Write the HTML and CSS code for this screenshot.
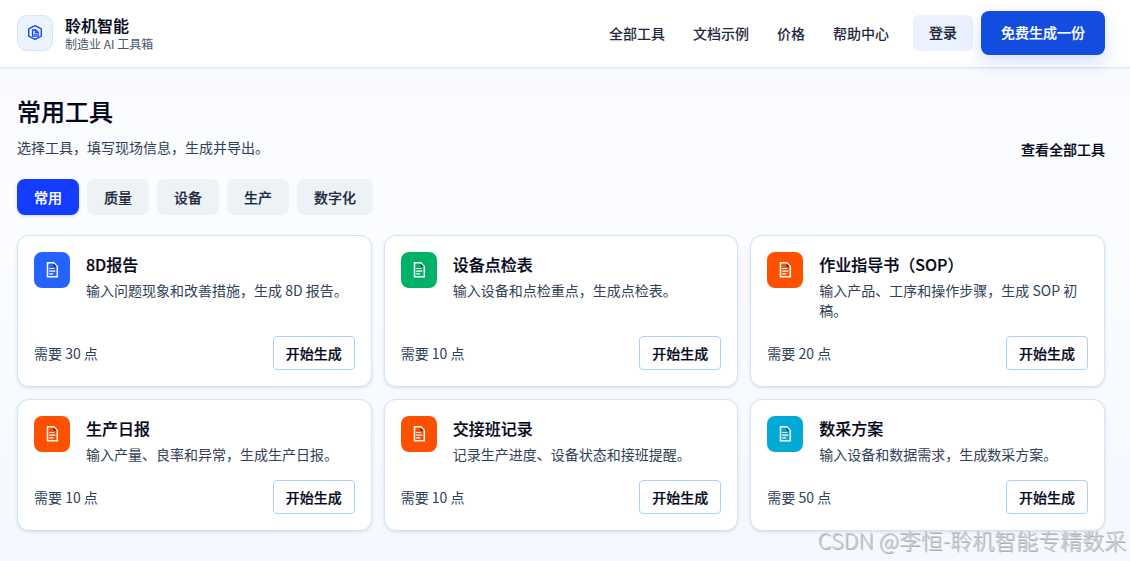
FILE: index.html
```
<!DOCTYPE html>
<html lang="zh-CN">
<head>
    <meta charset="UTF-8">
    <meta name="viewport" content="width=device-width, initial-scale=1.0">
    <title>聆机智能 - 制造业 AI 工具箱</title>
    <link rel="stylesheet" href="styles.css">
</head>
<body>
    <svg class="sprite" aria-hidden="true">
        <symbol id="icon-doc" viewBox="0 0 18 18">
            <path d="M4.5 1.8h6.3l3.5 3.7v10.3H4.5z" fill="none" stroke="currentColor" stroke-width="1.5"/>
            <path d="M10.6 2.6v3.2h3z" fill="#0f1f3d"/>
            <path d="M6.2 7.5h5M6.2 10.2h6M6.2 12.8h4" fill="none" stroke="currentColor" stroke-width="1.2"/>
        </symbol>
    </svg>

    <header class="header">
        <a class="brand">
            <span class="brand-logo">
                <svg width="18" height="18" viewBox="0 0 18 18" fill="none" stroke="currentColor">
                    <path d="M9 1.7l6.3 3.2v7.2L9 15.4l-6.3-3.3V4.9z" stroke-width="1.4" stroke-linejoin="round"/>
                    <path d="M6.6 6h3.2l2.4 2.2v4H6.6z" stroke-width="1.3"/>
                    <path d="M9.4 6.2v2.3h2.6M8 10.4h2.8" stroke-width="1.1"/>
                </svg>
            </span>
            <span class="brand-text">
                <strong>聆机智能</strong>
                <small>制造业 AI 工具箱</small>
            </span>
        </a>
        <nav class="nav">
            <a>全部工具</a>
            <a>文档示例</a>
            <a>价格</a>
            <a>帮助中心</a>
        </nav>
        <div class="actions">
            <button class="btn-login">登录</button>
            <button class="btn-primary">免费生成一份</button>
        </div>
    </header>

    <main class="main">
        <div class="section-head">
            <div>
                <h2>常用工具</h2>
                <p>选择工具，填写现场信息，生成并导出。</p>
            </div>
            <a class="view-all">查看全部工具</a>
        </div>

        <div class="tabs">
            <button class="tab active">常用</button>
            <button class="tab">质量</button>
            <button class="tab">设备</button>
            <button class="tab">生产</button>
            <button class="tab">数字化</button>
        </div>

        <div class="grid">
            <article class="card">
                <div class="card-top">
                    <span class="card-icon blue"><svg><use href="#icon-doc"/></svg></span>
                    <div>
                        <h3>8D报告</h3>
                        <p>输入问题现象和改善措施，生成 8D 报告。</p>
                    </div>
                </div>
                <div class="card-foot">
                    <span>需要 30 点</span>
                    <button class="btn-start">开始生成</button>
                </div>
            </article>
            <article class="card">
                <div class="card-top">
                    <span class="card-icon green"><svg><use href="#icon-doc"/></svg></span>
                    <div>
                        <h3>设备点检表</h3>
                        <p>输入设备和点检重点，生成点检表。</p>
                    </div>
                </div>
                <div class="card-foot">
                    <span>需要 10 点</span>
                    <button class="btn-start">开始生成</button>
                </div>
            </article>
            <article class="card">
                <div class="card-top">
                    <span class="card-icon orange"><svg><use href="#icon-doc"/></svg></span>
                    <div>
                        <h3>作业指导书（SOP）</h3>
                        <p>输入产品、工序和操作步骤，生成 SOP 初稿。</p>
                    </div>
                </div>
                <div class="card-foot">
                    <span>需要 20 点</span>
                    <button class="btn-start">开始生成</button>
                </div>
            </article>
            <article class="card">
                <div class="card-top">
                    <span class="card-icon orange"><svg><use href="#icon-doc"/></svg></span>
                    <div>
                        <h3>生产日报</h3>
                        <p>输入产量、良率和异常，生成生产日报。</p>
                    </div>
                </div>
                <div class="card-foot">
                    <span>需要 10 点</span>
                    <button class="btn-start">开始生成</button>
                </div>
            </article>
            <article class="card">
                <div class="card-top">
                    <span class="card-icon orange"><svg><use href="#icon-doc"/></svg></span>
                    <div>
                        <h3>交接班记录</h3>
                        <p>记录生产进度、设备状态和接班提醒。</p>
                    </div>
                </div>
                <div class="card-foot">
                    <span>需要 10 点</span>
                    <button class="btn-start">开始生成</button>
                </div>
            </article>
            <article class="card">
                <div class="card-top">
                    <span class="card-icon cyan"><svg><use href="#icon-doc"/></svg></span>
                    <div>
                        <h3>数采方案</h3>
                        <p>输入设备和数据需求，生成数采方案。</p>
                    </div>
                </div>
                <div class="card-foot">
                    <span>需要 50 点</span>
                    <button class="btn-start">开始生成</button>
                </div>
            </article>
        </div>
    </main>

    <div class="watermark">CSDN @李恒-聆机智能专精数采</div>
</body>
</html>
```
FILE: styles.css
```
* {
    box-sizing: border-box;
}
body {
    position: relative;
    margin: 0;
    height: 561px;
    overflow: hidden;
    font-family: "Noto Sans CJK SC", sans-serif;
    font-size: 14px;
    line-height: 20px;
    color: #314158;
    background: linear-gradient(180deg, #f8fafc 68px, #fbfcff 120px, #fafcff 240px, #f4f8ff 561px);
}
h2, h3, p {
    margin: 0;
}
button {
    font-family: inherit;
    font-size: 14px;
    line-height: 20px;
    border: 0;
    padding: 0 0 1px;
    cursor: pointer;
}
/* between medium and bold */
h2, h3, .brand-text strong, .view-all, .btn-login, .btn-primary, .tab, .btn-start {
    font-weight: 500;
    -webkit-text-stroke: 0.2px currentColor;
}
.sprite {
    position: absolute;
    width: 0;
    height: 0;
}
.header {
    display: flex;
    align-items: center;
    height: 68px;
    padding: 0 25px 2px 17px;
    background: #fff;
    border-bottom: 1px solid #dbe6fb;
    box-shadow: 0 1px 3px rgba(15, 23, 42, 0.04);
}
.brand {
    display: flex;
    align-items: center;
    gap: 12px;
    margin-right: auto;
}
.brand-logo {
    display: flex;
    align-items: center;
    justify-content: center;
    width: 36px;
    height: 36px;
    border: 1px solid #d3e4fd;
    border-radius: 10px;
    background: #ebf3ff;
    color: #1447f5;
}
.brand-text {
    display: flex;
    flex-direction: column;
    padding-top: 1px;
}
.brand-text strong {
    font-size: 16px;
    line-height: 21px;
    color: #020618;
}
.brand-text small {
    font-size: 12px;
    line-height: 16px;
    color: #45556c;
}
.nav {
    display: flex;
    gap: 28px;
    margin-right: 24px;
    font-weight: 500;
    color: #1d293d;
}
.actions {
    display: flex;
    align-items: center;
    gap: 8px;
}
.btn-login {
    width: 60px;
    height: 36px;
    border-radius: 6px;
    background: #eaf2ff;
    color: #1d293d;
}
.btn-primary {
    width: 124px;
    height: 44px;
    border-radius: 8px;
    background: #124de0;
    color: #fff;
    box-shadow: 0 8px 18px rgba(20, 71, 230, 0.16);
}
.main {
    padding: 27px 25px 0 17px;
}
.section-head {
    display: flex;
    justify-content: space-between;
    align-items: flex-end;
}
.section-head h2 {
    font-size: 24px;
    line-height: 32px;
    color: #020618;
}
.section-head p {
    margin-top: 8px;
    line-height: 24px;
}
.view-all {
    color: #020618;
}
.tabs {
    display: flex;
    gap: 8px;
    margin: 20px 0;
}
.tab {
    height: 36px;
    padding: 0 17px;
    border-radius: 8px;
    background: #edf2f6;
    color: #1d293d;
}
.tab.active {
    background: #133cff;
    color: #fff;
    box-shadow: 0 1px 3px rgba(20, 60, 255, 0.2);
}
.grid {
    display: grid;
    grid-template-columns: repeat(3, 1fr);
    gap: 12px;
}
.card {
    display: flex;
    flex-direction: column;
    justify-content: space-between;
    gap: 16px;
    padding: 16px;
    border: 1px solid #d2e3fc;
    border-radius: 12px;
    background: #fff;
    box-shadow: 0 1px 3px rgba(30, 64, 120, 0.14);
}
.card-top {
    display: flex;
    align-items: flex-start;
    gap: 16px;
}
.card-icon {
    display: flex;
    flex: none;
    align-items: center;
    justify-content: center;
    width: 36px;
    height: 36px;
    border-radius: 8px;
    color: #fff;
}
.card-icon svg {
    width: 18px;
    height: 18px;
}
.blue {
    background: #2563ff;
}
.green {
    background: #00b268;
}
.orange {
    background: #ff5000;
}
.cyan {
    background: #00aad4;
}
.card h3 {
    font-size: 16px;
    line-height: 24px;
    color: #020618;
}
.card p {
    margin-top: 4px;
}
.card-foot {
    display: flex;
    align-items: center;
    justify-content: space-between;
}
.btn-start {
    width: 82px;
    height: 34px;
    border: 1px solid #b0d0fc;
    border-radius: 4px;
    background: #fff;
    color: #020618;
}
.watermark {
    position: absolute;
    right: 4px;
    bottom: 6px;
    font-size: 22px;
    line-height: 32px;
    font-weight: 300;
    color: #c8cbd0;
    white-space: nowrap;
    text-shadow: 1px 1px 0 #b0b2b6;
}
```
